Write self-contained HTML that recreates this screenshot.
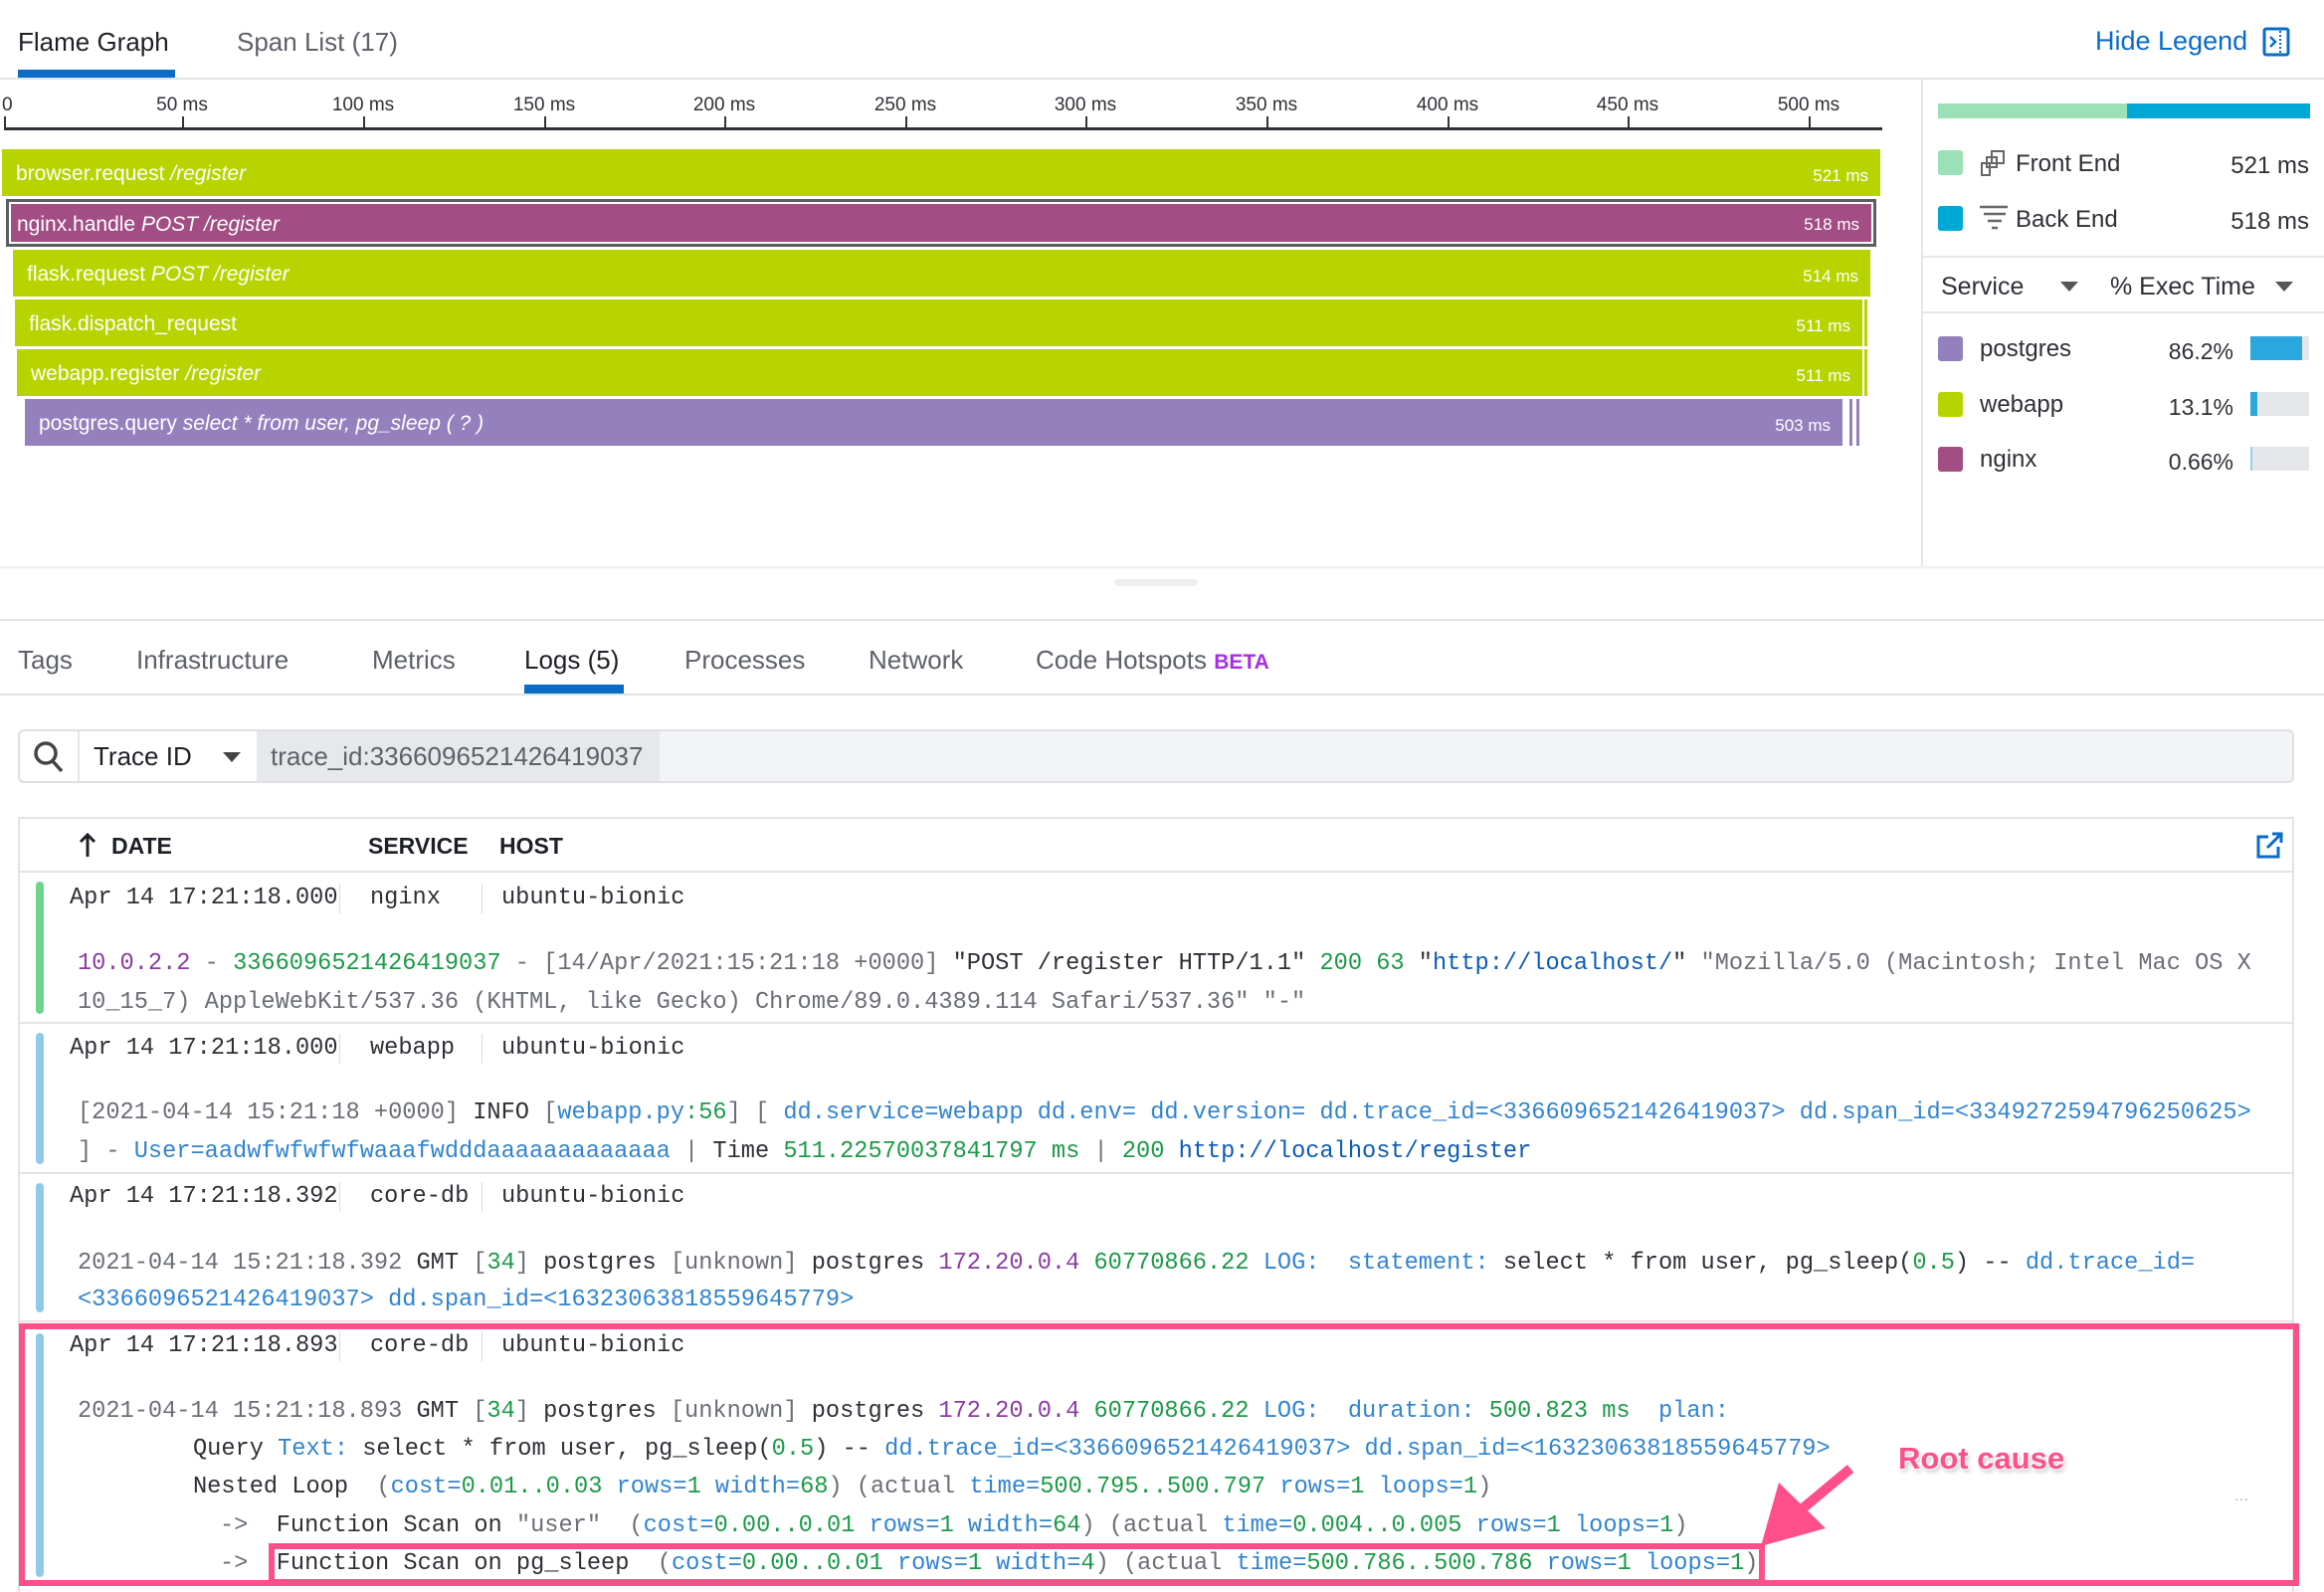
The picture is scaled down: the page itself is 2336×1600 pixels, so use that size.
<!DOCTYPE html>
<html><head><meta charset="utf-8">
<style>
*{margin:0;padding:0;box-sizing:border-box}
body{width:2336px;height:1600px;background:#fff;position:relative;overflow:hidden;font-family:"Liberation Sans",sans-serif;color:#2d3035}
.a{position:absolute;white-space:pre}
.tab{position:absolute;font-size:26px;color:#5d6168;top:27px}
.tk{position:absolute;top:95px;font-size:19px;color:#2d3035;transform:translateX(-50%)}
.tl{position:absolute;top:117px;width:2px;height:11px;background:#333}
.bar{position:absolute;height:47px;color:#fff;font-size:21px;line-height:49px;padding-left:14px}
.bar .dur{position:absolute;right:12px;font-size:17px;top:2px;color:#fff}
.l{position:absolute;white-space:pre;font-family:"Liberation Mono",monospace;font-size:23.65px;line-height:38px;color:#2d3035}
.d{color:#6a6e75}.k{color:#2d3035}.g{color:#1b9a47}.b{color:#3184d0}.p{color:#8b3aa6}.lb{color:#0b5cb8}
.sw{position:absolute;width:25px;height:25px;border-radius:3px}
.lt{position:absolute;font-size:24px;color:#2d3035}
.rb{position:absolute;left:36px;width:8px;border-radius:4px}
.sep{position:absolute;width:1px;height:30px;background:#ddd}
</style></head><body>

<div class="tab" style="left:18px;color:#1d2025">Flame Graph</div>
<div class="a" style="left:18px;top:70px;width:158px;height:8px;background:#0a6cc8"></div>
<div class="tab" style="left:238px">Span List (17)</div>
<div class="a" style="left:0;top:78px;width:2336px;height:2px;background:#e2e3e6"></div>
<div class="a" style="left:2106px;top:26px;font-size:27px;color:#0a6cc8">Hide Legend</div>
<svg class="a" style="left:2274px;top:27px" width="28" height="30" viewBox="0 0 28 30"><rect x="2" y="2" width="24" height="26" rx="2" fill="none" stroke="#0a6cc8" stroke-width="3"/><path d="M8 10l5 5-5 5" fill="none" stroke="#0a6cc8" stroke-width="2.5"/><path d="M18 4v22" stroke="#0a6cc8" stroke-width="2" stroke-dasharray="2 2"/></svg>

<div class="a" style="left:4px;top:128px;width:1888px;height:3px;background:#2d3035"></div>
<div class="tl" style="left:4px"></div>
<div class="a" style="left:2px;top:95px;font-size:19px">0</div>
<div class="tk" style="left:183px">50 ms</div><div class="tl" style="left:183px"></div>
<div class="tk" style="left:365px">100 ms</div><div class="tl" style="left:365px"></div>
<div class="tk" style="left:547px">150 ms</div><div class="tl" style="left:547px"></div>
<div class="tk" style="left:728px">200 ms</div><div class="tl" style="left:728px"></div>
<div class="tk" style="left:910px">250 ms</div><div class="tl" style="left:910px"></div>
<div class="tk" style="left:1091px">300 ms</div><div class="tl" style="left:1091px"></div>
<div class="tk" style="left:1273px">350 ms</div><div class="tl" style="left:1273px"></div>
<div class="tk" style="left:1455px">400 ms</div><div class="tl" style="left:1455px"></div>
<div class="tk" style="left:1636px">450 ms</div><div class="tl" style="left:1636px"></div>
<div class="tk" style="left:1818px">500 ms</div><div class="tl" style="left:1818px"></div>

<div class="bar" style="left:2px;top:150px;width:1888px;background:#b8d400">browser.request <i>/register</i><span class="dur">521 ms</span></div>
<div class="a" style="left:6px;top:200px;width:1880px;height:48px;border:3px solid #5b5d62;background:#fff"></div>
<div class="bar" style="left:10px;top:204px;width:1872px;height:40px;line-height:42px;background:#a24d84;border:1px solid #fff;padding-left:6px">nginx.handle <i>POST /register</i><span class="dur" style="top:0">518 ms</span></div>
<div class="bar" style="left:13px;top:251px;width:1867px;background:#b8d400">flask.request <i>POST /register</i><span class="dur">514 ms</span></div>
<div class="bar" style="left:15px;top:301px;width:1857px;background:#b8d400">flask.dispatch_request<span class="dur">511 ms</span></div>
<div class="a" style="left:1874px;top:301px;width:3px;height:47px;background:#b8d400"></div>
<div class="bar" style="left:17px;top:351px;width:1855px;background:#b8d400">webapp.register <i>/register</i><span class="dur">511 ms</span></div>
<div class="a" style="left:1874px;top:351px;width:3px;height:47px;background:#b8d400"></div>
<div class="bar" style="left:25px;top:401px;width:1827px;background:#9580be">postgres.query <i>select * from user, pg_sleep ( ? )</i><span class="dur">503 ms</span></div>
<div class="a" style="left:1859px;top:401px;width:3px;height:47px;background:#9580be"></div>
<div class="a" style="left:1866px;top:401px;width:3px;height:47px;background:#9580be"></div>

<div class="a" style="left:1931px;top:80px;width:2px;height:490px;background:#e6e7ea"></div>
<div class="a" style="left:1948px;top:104px;width:190px;height:15px;background:#9be0b6"></div>
<div class="a" style="left:2138px;top:104px;width:184px;height:15px;background:#00a8d6"></div>
<div class="sw" style="left:1948px;top:151px;background:#9be0b6"></div>
<svg class="a" style="left:1990px;top:150px" width="28" height="28" viewBox="0 0 28 28" fill="none" stroke="#666" stroke-width="2"><rect x="12" y="2" width="12" height="12"/><rect x="7" y="8" width="10" height="10"/><rect x="2" y="14" width="8" height="12"/></svg>
<div class="lt" style="left:2026px;top:151px">Front End</div>
<div class="lt" style="right:15px;top:153px">521 ms</div>
<div class="sw" style="left:1948px;top:207px;background:#00a8d6"></div>
<svg class="a" style="left:1988px;top:205px" width="32" height="30" viewBox="0 0 32 30" stroke="#666" stroke-width="2.5"><path d="M2 3h28M6 10h22M10 17h14M14 24h6"/></svg>
<div class="lt" style="left:2026px;top:207px">Back End</div>
<div class="lt" style="right:15px;top:209px">518 ms</div>
<div class="a" style="left:1933px;top:257px;width:403px;height:2px;background:#e6e7ea"></div>
<div class="lt" style="left:1951px;top:274px;font-size:25px">Service</div>
<div class="a" style="left:2071px;top:283px;border-left:9px solid transparent;border-right:9px solid transparent;border-top:10px solid #555"></div>
<div class="lt" style="left:2121px;top:274px;font-size:25px">% Exec Time</div>
<div class="a" style="left:2287px;top:283px;border-left:9px solid transparent;border-right:9px solid transparent;border-top:10px solid #555"></div>
<div class="a" style="left:1933px;top:313px;width:403px;height:2px;background:#e6e7ea"></div>
<div class="sw" style="left:1948px;top:338px;background:#9580be"></div>
<div class="lt" style="left:1990px;top:337px">postgres</div>
<div class="lt" style="right:91px;top:340px;font-size:23px">86.2%</div>
<div class="a" style="left:2262px;top:338px;width:59px;height:24px;background:#e6e7ea"></div>
<div class="a" style="left:2262px;top:338px;width:52px;height:24px;background:#2aa7dc"></div>
<div class="sw" style="left:1948px;top:394px;background:#b8d400"></div>
<div class="lt" style="left:1990px;top:393px">webapp</div>
<div class="lt" style="right:91px;top:396px;font-size:23px">13.1%</div>
<div class="a" style="left:2262px;top:394px;width:59px;height:24px;background:#e6e7ea"></div>
<div class="a" style="left:2262px;top:394px;width:7px;height:24px;background:#2aa7dc"></div>
<div class="sw" style="left:1948px;top:449px;background:#a24d84"></div>
<div class="lt" style="left:1990px;top:448px">nginx</div>
<div class="lt" style="right:91px;top:451px;font-size:23px">0.66%</div>
<div class="a" style="left:2262px;top:449px;width:59px;height:24px;background:#e6e7ea"></div>
<div class="a" style="left:2262px;top:449px;width:2px;height:24px;background:#8fd3ee"></div>

<div class="a" style="left:0;top:569px;width:2336px;height:4px;background:linear-gradient(#eceef1,#fff)"></div>
<div class="a" style="left:1120px;top:582px;width:84px;height:7px;border-radius:4px;background:#eceef0"></div>
<div class="a" style="left:0;top:622px;width:2336px;height:2px;background:#e2e3e6"></div>

<div class="tab" style="left:18px;top:648px">Tags</div>
<div class="tab" style="left:137px;top:648px">Infrastructure</div>
<div class="tab" style="left:374px;top:648px">Metrics</div>
<div class="tab" style="left:527px;top:648px;color:#1d2025">Logs (5)</div>
<div class="a" style="left:527px;top:688px;width:100px;height:9px;background:#0a6cc8"></div>
<div class="tab" style="left:688px;top:648px">Processes</div>
<div class="tab" style="left:873px;top:648px">Network</div>
<div class="tab" style="left:1041px;top:648px">Code Hotspots <b style="color:#a72ee6;font-size:21px">BETA</b></div>
<div class="a" style="left:0;top:697px;width:2336px;height:2px;background:#e2e3e6"></div>

<div class="a" style="left:18px;top:733px;width:2288px;height:54px;border:2px solid #dfe0e3;border-radius:6px;background:#f3f4f6"></div>
<div class="a" style="left:20px;top:735px;width:58px;height:50px;background:#fff;border-radius:5px 0 0 5px"></div>
<svg class="a" style="left:32px;top:743px" width="34" height="36" viewBox="0 0 34 36" fill="none" stroke="#444" stroke-width="3.5"><circle cx="14" cy="14" r="10"/><path d="M21 22l9 10"/></svg>
<div class="a" style="left:78px;top:735px;width:180px;height:50px;background:#fff;border-left:2px solid #e5e6e9"></div>
<div class="a" style="left:94px;top:745px;font-size:26px;color:#1d2025">Trace ID</div>
<div class="a" style="left:224px;top:756px;border-left:9px solid transparent;border-right:9px solid transparent;border-top:10px solid #444"></div>
<div class="a" style="left:258px;top:735px;width:405px;height:50px;background:#e7e8eb"></div>
<div class="a" style="left:272px;top:745px;font-size:26px;color:#5d6168">trace_id:3366096521426419037</div>

<div class="a" style="left:18px;top:821px;width:2288px;height:779px;border:2px solid #e2e3e6;border-bottom:none"></div>
<svg class="a" style="left:78px;top:836px" width="20" height="26" viewBox="0 0 20 26" fill="none" stroke="#1d2025" stroke-width="3"><path d="M10 25V3M3 10l7-7 7 7"/></svg>
<div class="a" style="left:112px;top:837px;font-size:23px;font-weight:bold;color:#1d2025">DATE</div>
<div class="a" style="left:370px;top:837px;font-size:23px;font-weight:bold;color:#1d2025">SERVICE</div>
<div class="a" style="left:502px;top:837px;font-size:23px;font-weight:bold;color:#1d2025">HOST</div>
<svg class="a" style="left:2266px;top:836px" width="30" height="28" viewBox="0 0 30 28" fill="none" stroke="#0a6cc8" stroke-width="3"><path d="M14 5H4v20h20V15"/><path d="M13 16L27 2M18 2h9v9"/></svg>
<div class="a" style="left:20px;top:875px;width:2284px;height:2px;background:#e2e3e6"></div>
<div class="a" style="left:20px;top:1027px;width:2284px;height:2px;background:#e2e3e6"></div>
<div class="a" style="left:20px;top:1178px;width:2284px;height:2px;background:#e2e3e6"></div>
<div class="a" style="left:20px;top:1327px;width:2284px;height:2px;background:#e2e3e6"></div>

<div class="rb" style="top:886px;height:133px;background:#6dd68c"></div>
<div class="rb" style="top:1038px;height:132px;background:#8fcbe8"></div>
<div class="rb" style="top:1189px;height:130px;background:#8fcbe8"></div>
<div class="rb" style="top:1340px;height:245px;background:#8fcbe8"></div>

<div class="l" style="left:70px;top:884px">Apr 14 17:21:18.000</div><div class="sep" style="left:341px;top:888px"></div>
<div class="l" style="left:372px;top:884px">nginx</div><div class="sep" style="left:484px;top:888px"></div>
<div class="l" style="left:504px;top:884px">ubuntu-bionic</div>
<div class="l" style="left:78px;top:950px"><span class="p">10.0.2.2</span><span class="d"> - </span><span class="g">3366096521426419037</span><span class="d"> - [14/Apr/2021:15:21:18 +0000] </span><span class="k">"POST /register HTTP/1.1" </span><span class="g">200 63</span><span class="k"> "</span><span class="lb">http://localhost/</span><span class="k">" </span><span class="d">"Mozilla/5.0 (Macintosh; Intel Mac OS X</span></div>
<div class="l d" style="left:78px;top:989px">10_15_7) AppleWebKit/537.36 (KHTML, like Gecko) Chrome/89.0.4389.114 Safari/537.36" "-"</div>

<div class="l" style="left:70px;top:1035px">Apr 14 17:21:18.000</div><div class="sep" style="left:341px;top:1039px"></div>
<div class="l" style="left:372px;top:1035px">webapp</div><div class="sep" style="left:484px;top:1039px"></div>
<div class="l" style="left:504px;top:1035px">ubuntu-bionic</div>
<div class="l" style="left:78px;top:1100px"><span class="d">[2021-04-14 15:21:18 +0000] </span><span class="k">INFO </span><span class="d">[</span><span class="b">webapp.py</span><span class="g">:56</span><span class="d">] [ </span><span class="b">dd.service=webapp dd.env= dd.version= dd.trace_id=&lt;3366096521426419037&gt; dd.span_id=&lt;3349272594796250625&gt;</span></div>
<div class="l" style="left:78px;top:1139px"><span class="d">] - </span><span class="b">User=aadwfwfwfwfwaaafwdddaaaaaaaaaaaaa</span><span class="d"> | </span><span class="k">Time </span><span class="g">511.22570037841797 ms</span><span class="d"> | </span><span class="g">200 </span><span class="lb">http://localhost/register</span></div>

<div class="l" style="left:70px;top:1184px">Apr 14 17:21:18.392</div><div class="sep" style="left:341px;top:1188px"></div>
<div class="l" style="left:372px;top:1184px">core-db</div><div class="sep" style="left:484px;top:1188px"></div>
<div class="l" style="left:504px;top:1184px">ubuntu-bionic</div>
<div class="l" style="left:78px;top:1251px"><span class="d">2021-04-14 15:21:18.392 </span><span class="k">GMT </span><span class="d">[</span><span class="g">34</span><span class="d">] </span><span class="k">postgres </span><span class="d">[unknown] </span><span class="k">postgres </span><span class="p">172.20.0.4 </span><span class="g">60770866.22 </span><span class="b">LOG:  statement: </span><span class="k">select * from user, pg_sleep(</span><span class="g">0.5</span><span class="k">) -- </span><span class="b">dd.trace_id=</span></div>
<div class="l b" style="left:78px;top:1288px">&lt;3366096521426419037&gt; dd.span_id=&lt;16323063818559645779&gt;</div>

<div class="l" style="left:70px;top:1334px">Apr 14 17:21:18.893</div><div class="sep" style="left:341px;top:1338px"></div>
<div class="l" style="left:372px;top:1334px">core-db</div><div class="sep" style="left:484px;top:1338px"></div>
<div class="l" style="left:504px;top:1334px">ubuntu-bionic</div>
<div class="l" style="left:78px;top:1400px"><span class="d">2021-04-14 15:21:18.893 </span><span class="k">GMT </span><span class="d">[</span><span class="g">34</span><span class="d">] </span><span class="k">postgres </span><span class="d">[unknown] </span><span class="k">postgres </span><span class="p">172.20.0.4 </span><span class="g">60770866.22 </span><span class="b">LOG:  duration: </span><span class="g">500.823 ms</span><span class="b">  plan:</span></div>
<div class="l" style="left:194px;top:1438px"><span class="k">Query </span><span class="b">Text: </span><span class="k">select * from user, pg_sleep(</span><span class="g">0.5</span><span class="k">) -- </span><span class="b">dd.trace_id=&lt;3366096521426419037&gt; dd.span_id=&lt;16323063818559645779&gt;</span></div>
<div class="l" style="left:194px;top:1476px"><span class="k">Nested Loop  </span><span class="d">(</span><span class="b">cost=</span><span class="g">0.01..0.03</span><span class="b"> rows=</span><span class="g">1</span><span class="b"> width=</span><span class="g">68</span><span class="d">) (actual </span><span class="b">time=</span><span class="g">500.795..500.797</span><span class="b"> rows=</span><span class="g">1</span><span class="b"> loops=</span><span class="g">1</span><span class="d">)</span></div>
<div class="l" style="left:221px;top:1515px"><span class="d">-&gt;  </span><span class="k">Function Scan on </span><span class="d">"user"  (</span><span class="b">cost=</span><span class="g">0.00..0.01</span><span class="b"> rows=</span><span class="g">1</span><span class="b"> width=</span><span class="g">64</span><span class="d">) (actual </span><span class="b">time=</span><span class="g">0.004..0.005</span><span class="b"> rows=</span><span class="g">1</span><span class="b"> loops=</span><span class="g">1</span><span class="d">)</span></div>
<div class="l" style="left:221px;top:1553px"><span class="d">-&gt;  </span><span class="k">Function Scan on pg_sleep  </span><span class="d">(</span><span class="b">cost=</span><span class="g">0.00..0.01</span><span class="b"> rows=</span><span class="g">1</span><span class="b"> width=</span><span class="g">4</span><span class="d">) (actual </span><span class="b">time=</span><span class="g">500.786..500.786</span><span class="b"> rows=</span><span class="g">1</span><span class="b"> loops=</span><span class="g">1</span><span class="d">)</span></div>
<div class="a" style="left:2246px;top:1498px;font-size:14px;color:#999">···</div>

<div class="a" style="left:19px;top:1330px;width:2292px;height:264px;border:6px solid #ff4f8b"></div>
<div class="a" style="left:270px;top:1551px;width:1504px;height:42px;border:6px solid #ff4f8b"></div>
<svg class="a" style="left:1760px;top:1470px" width="110" height="90" viewBox="0 0 110 90"><path d="M100 6L40 56" stroke="#ff4f8b" stroke-width="10"/><path d="M28 20L10 84L75 66Z" fill="#ff4f8b"/></svg>
<div class="a" style="left:1908px;top:1448px;font-size:31px;font-weight:bold;color:#ff4f8b;text-shadow:0 0 3px #fff,1px 1px 0 #fff,-1px -1px 0 #fff,2px 3px 4px rgba(0,0,0,.25)">Root cause</div>

</body></html>
